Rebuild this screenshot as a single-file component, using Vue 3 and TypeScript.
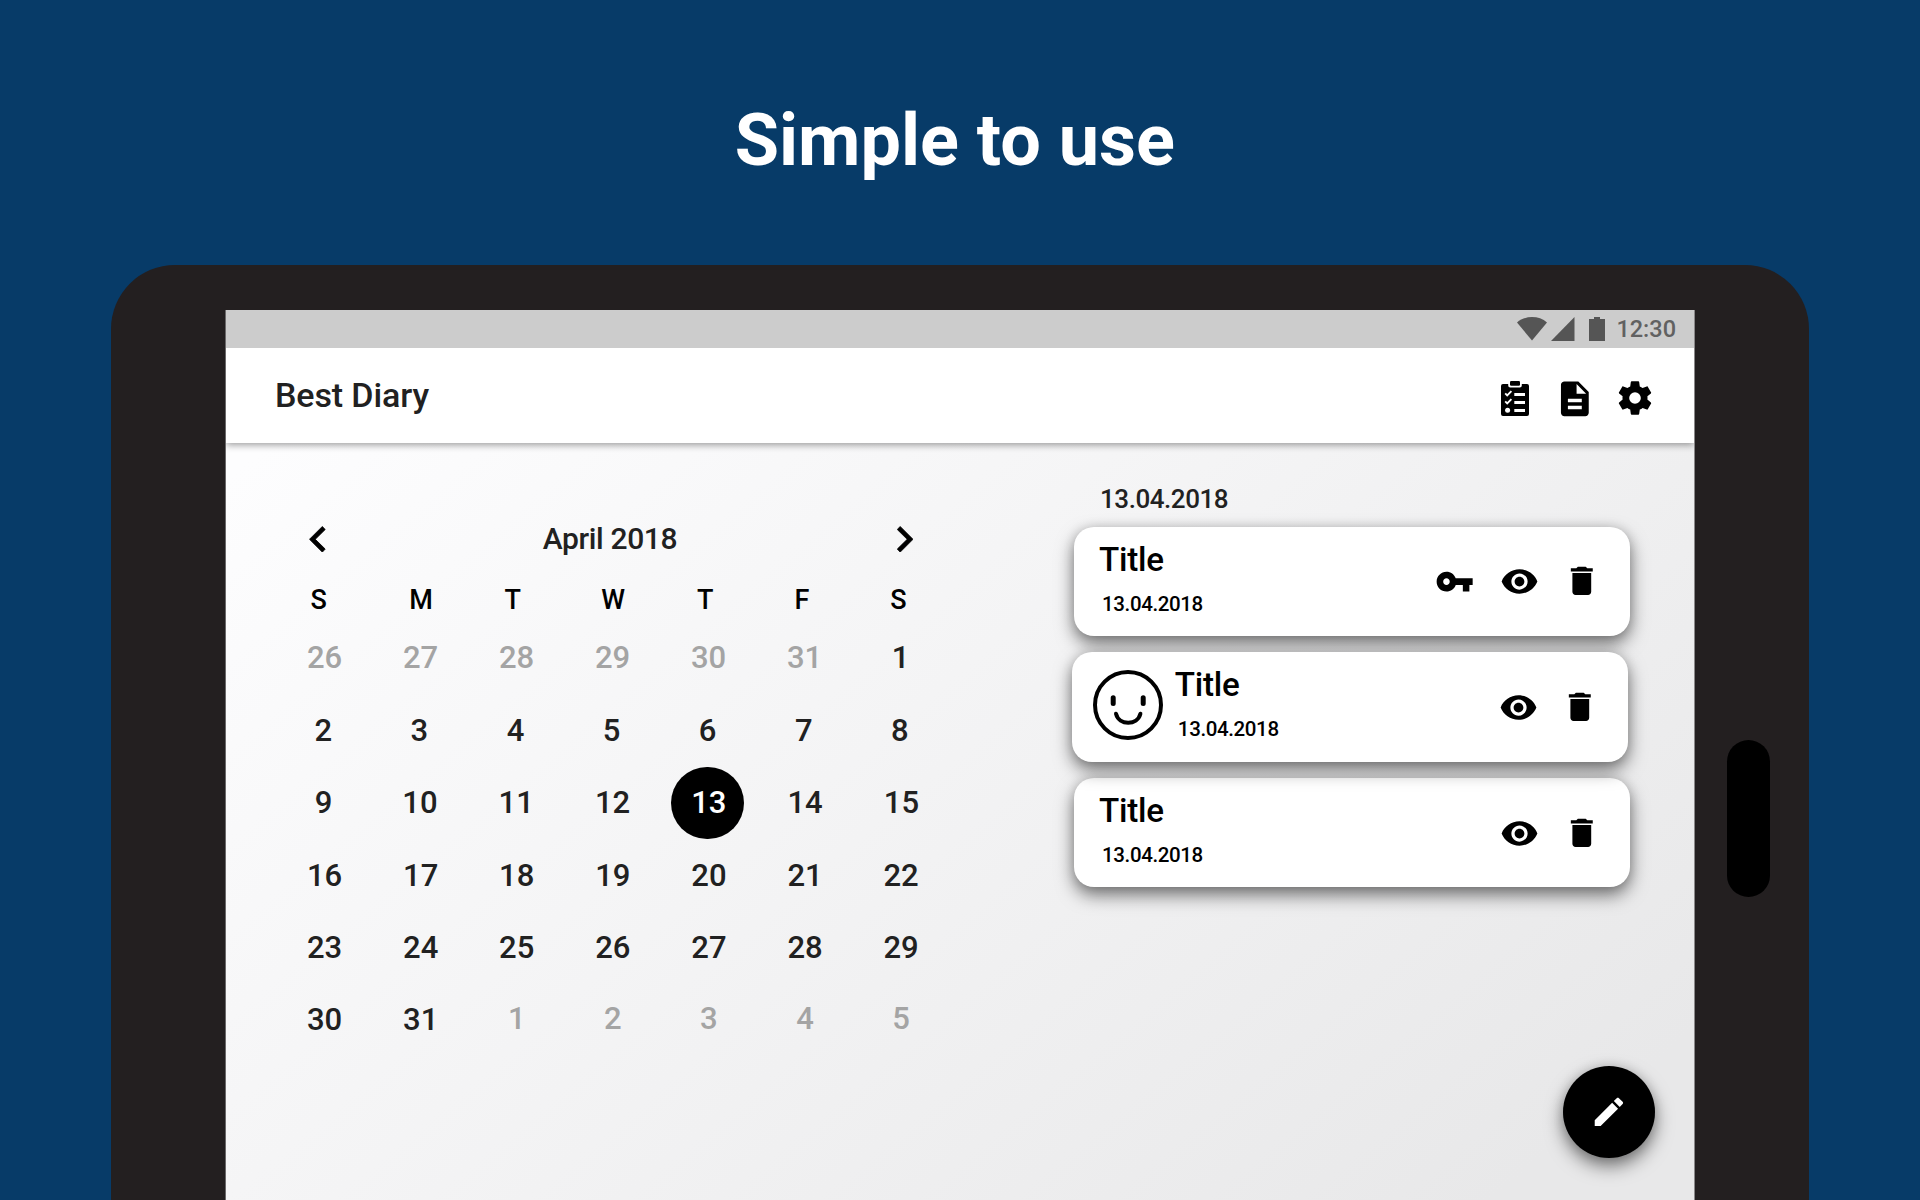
<script setup lang="ts">
interface Day {
  label: number
  muted?: boolean
  selected?: boolean
}

interface Entry {
  title: string
  date: string
  locked?: boolean
  mood?: boolean
}

const weekdays: string[] = ['S', 'M', 'T', 'W', 'T', 'F', 'S']

const range = (from: number, to: number): number[] =>
  Array.from({ length: to - from + 1 }, (_, i) => from + i)

const days: Day[] = [
  ...range(26, 31).map((label) => ({ label, muted: true })),
  ...range(1, 31).map((label) => ({ label, selected: label === 13 })),
  ...range(1, 5).map((label) => ({ label, muted: true })),
]

const weeks: Day[][] = range(0, 5).map((i) => days.slice(i * 7, i * 7 + 7))

const entries: Entry[] = [
  { title: 'Title', date: '13.04.2018', locked: true },
  { title: 'Title', date: '13.04.2018', mood: true },
  { title: 'Title', date: '13.04.2018' },
]
</script>

<template>
  <div class="page">
    <h1 class="headline">Simple to use</h1>
    <div class="device">
      <div class="screen">
        <div class="status">
          <svg class="wifi" viewBox="0 0 30 24"><path d="M0 5.4C8-1.7 22-1.7 30 5.4L15 23.6z" /></svg>
          <svg class="signal" viewBox="0 0 24 24"><path d="M23.5 0v24H0z" /></svg>
          <svg class="battery" viewBox="0 0 16 24"><path d="M5 0h6v2h5v22H0V2h5z" /></svg>
          <span class="clock">12:30</span>
        </div>
        <header class="appbar">
          <span class="brand">Best Diary</span>
          <svg class="tasks" viewBox="0 0 28 35">
            <path d="M2 3h5.2v1.5q0 2 2 2h9.6q2 0 2-2V3H26q2 0 2 2v28q0 2-2 2H2q-2 0-2-2V5q0-2 2-2z" />
            <rect x="9" y="0" width="10" height="4.8" rx="1.2" />
            <g fill="#fff">
              <rect x="13.3" y="12" width="10.7" height="3" />
              <rect x="13.3" y="20" width="10.7" height="3" />
              <rect x="13.3" y="28" width="10.7" height="3" />
              <circle cx="6.6" cy="29.2" r="2.5" />
            </g>
            <path d="M4.2 12.4l2 2 4.2-4.2M4.2 20.4l2 2 4.2-4.2" fill="none" stroke="#fff" stroke-width="1.9" />
          </svg>
          <svg class="notes" viewBox="0 0 24 24"><path d="M14 2H6c-1.1 0-1.99.9-1.99 2L4 20c0 1.1.89 2 1.99 2H18c1.1 0 2-.9 2-2V8l-6-6zm2 16H8v-2h8v2zm0-4H8v-2h8v2zm-3-5V3.5L18.5 9H13z" /></svg>
          <svg class="gear" viewBox="0 0 24 24"><path d="M12,15.5A3.5,3.5 0 0,1 8.5,12A3.5,3.5 0 0,1 12,8.5A3.5,3.5 0 0,1 15.5,12A3.5,3.5 0 0,1 12,15.5M19.43,12.97C19.47,12.65 19.5,12.33 19.5,12C19.5,11.67 19.47,11.34 19.43,11L21.54,9.37C21.73,9.22 21.78,8.95 21.66,8.73L19.66,5.27C19.54,5.05 19.27,4.96 19.05,5.05L16.56,6.05C16.04,5.66 15.5,5.32 14.87,5.07L14.5,2.42C14.46,2.18 14.25,2 14,2H10C9.75,2 9.54,2.18 9.5,2.42L9.13,5.07C8.5,5.32 7.96,5.66 7.44,6.05L4.95,5.05C4.73,4.96 4.46,5.05 4.34,5.27L2.34,8.73C2.21,8.95 2.27,9.22 2.46,9.37L4.57,11C4.53,11.34 4.5,11.67 4.5,12C4.5,12.33 4.53,12.65 4.57,12.97L2.46,14.63C2.27,14.78 2.21,15.05 2.34,15.27L4.34,18.73C4.46,18.95 4.73,19.03 4.95,18.95L7.44,17.94C7.96,18.34 8.5,18.68 9.13,18.93L9.5,21.58C9.54,21.82 9.75,22 10,22H14C14.25,22 14.46,21.82 14.5,21.58L14.87,18.93C15.5,18.67 16.04,18.34 16.56,17.94L19.05,18.95C19.27,19.03 19.54,18.95 19.66,18.73L21.66,15.27C21.78,15.05 21.73,14.78 21.54,14.63L19.43,12.97Z" /></svg>
        </header>
        <main class="content">
          <section class="calendar">
            <div class="month">
              <svg class="arrow" viewBox="0 0 7.41 12"><path d="M7.3 10.4L2.83 6l4.47-4.4L6 .2 .2 6 6 11.8z" /></svg>
              <span class="month-name">April 2018</span>
              <svg class="arrow" viewBox="0 0 7.41 12"><path d="M.11 10.4L4.58 6 .11 1.6 1.41 .2 7.21 6l-5.8 5.8z" /></svg>
            </div>
            <div class="weekdays">
              <span v-for="(name, i) in weekdays" :key="i">{{ name }}</span>
            </div>
            <div v-for="(week, w) in weeks" :key="w" class="week">
              <span
                v-for="(day, d) in week"
                :key="d"
                class="day"
                :class="{ muted: day.muted, selected: day.selected }"
              >{{ day.label }}</span>
            </div>
          </section>
          <section class="entries">
            <div class="entries-date">13.04.2018</div>
            <article v-for="(entry, i) in entries" :key="i" class="card" :class="{ mood: entry.mood }">
              <svg v-if="entry.mood" class="smiley" viewBox="0 0 70 70">
                <g fill="none" stroke="#000" stroke-linecap="round">
                  <circle cx="35" cy="35" r="33" stroke-width="4" />
                  <path d="M20.2 27.8v5.6M50.2 27.8v5.6" stroke-width="5" />
                  <path d="M23 43.8C26 55.8 44.4 55.8 47.4 43.8" stroke-width="4" />
                </g>
              </svg>
              <div class="texts">
                <div class="title">{{ entry.title }}</div>
                <div class="date">{{ entry.date }}</div>
              </div>
              <svg v-if="entry.locked" class="key" viewBox="0 0 24 24"><path d="M12.65 10C11.83 7.67 9.61 6 7 6c-3.31 0-6 2.69-6 6s2.69 6 6 6c2.61 0 4.83-1.67 5.65-4H17v4h4v-4h2v-4H12.65zM7 14c-1.1 0-2-.9-2-2s.9-2 2-2 2 .9 2 2-.9 2-2 2z" /></svg>
              <svg class="eye" viewBox="0 0 24 24"><path d="M12 4.5C7 4.5 2.73 7.61 1 12c1.73 4.39 6 7.5 11 7.5s9.27-3.11 11-7.5c-1.73-4.39-6-7.5-11-7.5zM12 17c-2.76 0-5-2.24-5-5s2.24-5 5-5 5 2.24 5 5-2.24 5-5 5zm0-8c-1.66 0-3 1.34-3 3s1.34 3 3 3 3-1.34 3-3-1.34-3-3-3z" /></svg>
              <svg class="trash" viewBox="0 0 24 24"><path d="M6 19c0 1.1.9 2 2 2h8c1.1 0 2-.9 2-2V7H6v12zM19 4h-3.5l-1-1h-5l-1 1H5v2h14V4z" /></svg>
            </article>
          </section>
          <button class="fab">
            <svg viewBox="0 0 24 24"><path d="M3 17.25V21h3.75L17.81 9.94l-3.75-3.75L3 17.25zM20.71 7.04c.39-.39.39-1.02 0-1.41l-2.34-2.34c-.39-.39-1.02-.39-1.41 0l-1.83 1.83 3.75 3.75 1.83-1.83z" /></svg>
          </button>
        </main>
      </div>
      <div class="home"></div>
    </div>
  </div>
</template>

<style>
body {
  margin: 0;
  overflow: hidden;
}
</style>

<style scoped>
.page {
  width: 1920px;
  height: 1200px;
  overflow: hidden;
  background: #073b68;
  font-family: Roboto, "Liberation Sans", sans-serif;
  font-weight: 500;
  color: #212121;
}

svg {
  display: block;
  flex: none;
}

.headline {
  box-sizing: border-box;
  height: 265px;
  margin: 0;
  padding: 91px 10.5px 0 0;
  font-size: 72px;
  font-weight: 700;
  line-height: 100px;
  text-align: center;
  color: #fff;
}

.device {
  display: flex;
  box-sizing: border-box;
  width: 1698px;
  height: 935px;
  margin-left: 111px;
  padding: 45px 0 0 114px;
  border-radius: 64px 64px 0 0;
  background: #231f20;
}

.screen {
  display: flex;
  flex-direction: column;
  width: 1468px;
  height: 890px;
  border-left: 1px solid #6b696a;
  border-right: 1px solid #8a8889;
  overflow: hidden;
  background: linear-gradient(140deg, #fdfdfe 8%, #f4f4f5 46%, #e8e8e9 92%);
}

.status {
  display: flex;
  align-items: center;
  justify-content: flex-end;
  flex: none;
  height: 38px;
  padding-right: 18px;
  background: #ccc;
  fill: #555;
}

.wifi {
  width: 30px;
  height: 24px;
  margin-right: 4px;
}

.signal {
  width: 24px;
  height: 24px;
  margin-right: 14px;
}

.battery {
  width: 16px;
  height: 24px;
}

.clock {
  margin-left: 11.5px;
  font-size: 23.5px;
  line-height: 38px;
  color: #616161;
}

.appbar {
  display: flex;
  align-items: center;
  flex: none;
  box-sizing: border-box;
  height: 95px;
  padding: 5px 39px 0 49px;
  background: #fff;
  box-shadow: 0 2px 7px rgba(0, 0, 0, 0.38);
  clip-path: inset(0 0 -12px 0);
}

.brand {
  flex: 1;
  padding-bottom: 7px;
  font-size: 34px;
  line-height: 88px;
  letter-spacing: -0.12px;
}

.tasks {
  width: 28px;
  height: 35px;
  margin-right: 24.5px;
}

.notes {
  width: 41.7px;
  height: 41.7px;
  margin: 1px 19.5px 0 0;
}

.gear {
  width: 40px;
  height: 40px;
}

.content {
  position: relative;
  display: flex;
  flex: 1;
}

.calendar {
  width: 673px;
  margin: 67px 0 0 50.5px;
}

.month {
  display: flex;
  align-items: center;
  justify-content: space-between;
  height: 60px;
  margin-bottom: 10px;
  padding: 0 36.5px 0 32.5px;
}

.arrow {
  width: 16.5px;
  height: 26.6px;
  margin-bottom: 2px;
  fill: #000;
  stroke: #000;
  stroke-width: 0.35;
}

.month-name {
  padding: 0 2px 2px 0;
  font-size: 30px;
  line-height: 58px;
  letter-spacing: -0.35px;
}

.weekdays {
  display: grid;
  grid-template-columns: 95px 109.6px 73.8px 127.2px 56.8px 136.8px 56px;
  margin: 0 0 2.2px -5.3px;
  font-size: 27px;
  line-height: 40px;
  text-align: center;
  color: #000;
}

.week {
  display: grid;
  grid-template-columns: repeat(7, 96.1px);
  height: 72.4px;
  font-size: 31px;
  line-height: 72.4px;
  text-align: center;
}

.week:nth-of-type(3) {
  grid-template-columns: repeat(7, 96px);
}

.week:nth-of-type(4) {
  margin-left: -1.3px;
}

.week:nth-of-type(5) {
  grid-template-columns: repeat(7, 96.3px);
  margin-left: -1px;
}

.week:nth-of-type(6) {
  line-height: 73.4px;
}

.week:last-of-type {
  line-height: 71.6px;
}

.week:last-of-type .muted {
  line-height: 70.4px;
}

.muted {
  color: #a4a4a4;
}

.selected {
  position: relative;
  z-index: 0;
  color: #fff;
}

.selected::before {
  content: "";
  position: absolute;
  z-index: -1;
  top: -0.2px;
  left: 10.8px;
  width: 72.6px;
  height: 72.6px;
  border-radius: 50%;
  background: #000;
}

.entries {
  display: flex;
  flex-direction: column;
  width: 556px;
  margin: 28.5px 0 0 124.2px;
}

.entries-date {
  flex: none;
  padding-left: 26.3px;
  font-size: 26px;
  line-height: 55.2px;
  letter-spacing: -0.45px;
}

.card {
  display: flex;
  align-items: center;
  flex: none;
  box-sizing: border-box;
  width: 556px;
  height: 109px;
  margin-bottom: 16.8px;
  padding: 0 29.6px 0 25.2px;
  border-radius: 20px;
  background: #fff;
  color: #000;
  box-shadow: 0 8px 18px rgba(0, 0, 0, 0.52), 0 0 12px rgba(0, 0, 0, 0.12);
}

.card.mood {
  z-index: 1;
  height: 109.4px;
  margin: -0.4px 0 16.8px -1.4px;
  padding-left: 20.7px;
}

.smiley {
  width: 70px;
  height: 70px;
  margin: 0 11.7px 3.2px 0;
}

.texts {
  flex: 1;
  padding-top: 1.4px;
}

.mood .texts {
  padding-top: 0.6px;
}

.title {
  font-size: 33.2px;
  line-height: 45px;
  letter-spacing: -0.2px;
}

.date {
  padding-left: 3.2px;
  font-size: 20.5px;
  line-height: 45.6px;
  letter-spacing: -0.38px;
}

.key {
  width: 39.3px;
  height: 39.3px;
  margin-right: 26.3px;
}

.eye {
  width: 39px;
  height: 39px;
  margin: 1px 23.2px 0 0;
}

.trash {
  width: 37.6px;
  height: 37.6px;
}

.fab {
  position: absolute;
  top: 623px;
  left: 1337px;
  display: flex;
  align-items: center;
  justify-content: center;
  width: 92px;
  height: 92px;
  padding: 0;
  border: 0;
  border-radius: 50%;
  background: #000;
  box-shadow: 0 8px 18px rgba(0, 0, 0, 0.5), 0 0 12px rgba(0, 0, 0, 0.12);
}

.fab svg {
  width: 37.8px;
  height: 37.8px;
  fill: #fff;
}

.home {
  width: 43px;
  height: 157px;
  margin: 430px 0 0 32px;
  border-radius: 21.5px;
  background: #000;
}
</style>
